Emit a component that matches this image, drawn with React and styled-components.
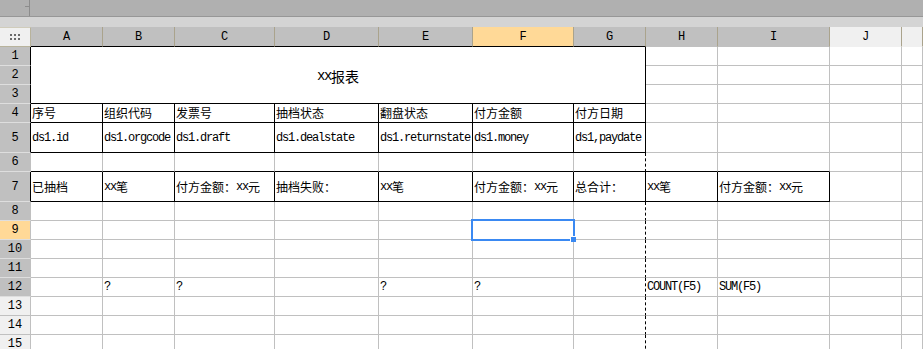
import React from 'react';
import styled, { createGlobalStyle } from 'styled-components';

const GlobalStyle = createGlobalStyle`
  html, body {
    margin: 0;
    padding: 0;
    background: #ffffff;
    overflow: hidden;
  }
  * {
    box-sizing: border-box;
  }
`;

const GRAY = '#c0c0c0';
const BLACK = '#000000';
const HEAD = '#c0c0c0';
const HEAD_LIGHT = '#f0f0f0';
const HEAD_SEL = '#ffd997';
const TAN = '#aaa38c';

const COLS = ['A', 'B', 'C', 'D', 'E', 'F', 'G', 'H', 'I', 'J', ''];
const WIDTHS = [72, 72, 100, 104, 94, 101, 72, 72, 112, 72];
const ROWS = Array.from({ length: 15 }, (_, i) => i + 1);

const CONTENT = {
  4: ['序号', '组织代码', '发票号', '抽档状态', '翻盘状态', '付方金额', '付方日期'],
  5: ['ds1.id', 'ds1.orgcode', 'ds1.draft', 'ds1.dealstate', 'ds1.returnstate', 'ds1.money', 'ds1,paydate'],
  7: ['已抽档', 'xx笔', '付方金额：xx元', '抽档失败：', 'xx笔', '付方金额：xx元', '总合计：', 'xx笔', '付方金额：xx元'],
  12: ['', '?', '?', '', '?', '?', '', 'COUNT(F5)', 'SUM(F5)'],
};

const Page = styled.div`
  width: 923px;
  height: 349px;
  overflow: hidden;
  background: #ffffff;
  display: flex;
  flex-direction: column;
`;

const TopBar = styled.div`
  height: 17px;
  flex: none;
  display: flex;
  background: #b0b0b0;
  border-bottom: 1px solid #979797;
`;

const TopLeft = styled.div`
  width: 30px;
  display: flex;
  justify-content: flex-end;
  padding-top: 6px;
  border-right: 1px solid #8c8c8c;
`;

const Tick = styled.div`
  width: 4px;
  height: 1px;
  background: #8c8c8c;
`;

const Band = styled.div`
  height: 10px;
  flex: none;
  background: #d4d4d4;
`;

const Sheet = styled.div`
  display: grid;
  grid-template-columns: 31px ${WIDTHS.map((w) => `${w}px`).join(' ')} 1fr;
  grid-template-rows: 20px ${ROWS.map((r) => (r === 5 || r === 7 ? '30px' : '19px')).join(' ')};
  font-family: "Noto Sans CJK SC", sans-serif;
  font-size: 12px;
  color: #000;
`;

const Corner = styled.div`
  background: #f0f0f0;
  border: 1px solid #b8b39c;
  border-left: none;
  border-top-color: #d0ccbb;
  display: flex;
  align-items: center;
  justify-content: center;
`;

const Dots = styled.div`
  display: grid;
  grid-template-columns: repeat(3, 2px);
  grid-auto-rows: 2px;
  gap: 2px;
  span {
    background: #6a6a6a;
  }
`;

const ColHead = styled.div`
  background: ${(p) => p.$bg};
  border-right: 1px solid ${TAN};
  border-bottom: 1px solid ${(p) => p.$bottom};
  display: flex;
  align-items: center;
  justify-content: center;
  font-family: "Liberation Mono", monospace;
  font-size: 12px;
  line-height: 1;
  padding-top: 1px;
`;

const RowHead = styled.div`
  grid-column: 1;
  background: ${(p) => p.$bg};
  border-right: 1px solid ${(p) => p.$right};
  border-bottom: 1px solid ${(p) => p.$bottom};
  display: flex;
  align-items: center;
  justify-content: center;
  font-family: "Liberation Mono", monospace;
  font-size: 12px;
  line-height: 1;
`;

const Cell = styled.div`
  position: relative;
  background: #ffffff;
  border-right: 1px ${(p) => (p.$dashed ? 'dashed' : 'solid')} ${(p) => p.$right};
  border-bottom: 1px solid ${(p) => p.$bottom};
  display: flex;
  align-items: center;
  padding-left: 1px;
  white-space: nowrap;
  line-height: 1;
  min-width: 0;
`;

const Title = styled.div`
  grid-column: 2 / span 7;
  grid-row: 2 / span 3;
  border-right: 1px solid ${BLACK};
  border-bottom: 1px solid ${BLACK};
  display: flex;
  align-items: center;
  justify-content: center;
  font-size: 14px;
  line-height: 1;
  padding-top: 1px;
`;

const Lat = styled.span`
  font-family: "Liberation Mono", monospace;
  letter-spacing: -0.1em;
`;

const Selection = styled.div`
  position: absolute;
  z-index: 2;
  left: -2px;
  top: -2px;
  width: 104px;
  height: 22px;
  border: 2px solid #3a89f2;
  pointer-events: none;
`;

const Handle = styled.div`
  position: absolute;
  left: 97px;
  top: 15px;
  width: 6px;
  height: 6px;
  background: #3a89f2;
  border: 1px solid #ffffff;
  border-right: none;
  border-bottom: none;
`;

const Txt = ({ text }) =>
  text
    .split(/([\x20-\x7e]+)/)
    .filter(Boolean)
    .map((part, i) => (/^[\x20-\x7e]+$/.test(part) ? <Lat key={i}>{part}</Lat> : <span key={i}>{part}</span>));

const inTable = (r, c) => ((r === 4 || r === 5) && c <= 6) || (r === 7 && c <= 8);

const rightOf = (r, c) => {
  if (inTable(r, c)) return { color: BLACK, dashed: false };
  if (c === 6) return { color: BLACK, dashed: true };
  return { color: GRAY, dashed: false };
};

const bottomOf = (r, c) => (inTable(r, c) || (r === 6 && c <= 8) ? BLACK : GRAY);

const rowHeadBg = (r) => (r === 9 ? HEAD_SEL : r <= 12 ? HEAD : HEAD_LIGHT);

const colHeadBg = (c) => (c === 5 ? HEAD_SEL : c <= 8 ? HEAD : HEAD_LIGHT);

const App = () => (
  <Page>
    <GlobalStyle />
    <TopBar>
      <TopLeft>
        <Tick />
      </TopLeft>
    </TopBar>
    <Band />
    <Sheet>
      <Corner>
        <Dots>
          {Array.from({ length: 6 }, (_, i) => (
            <span key={i} />
          ))}
        </Dots>
      </Corner>
      {COLS.map((name, c) => (
        <ColHead key={c} $bg={colHeadBg(c)} $bottom={c <= 6 ? BLACK : colHeadBg(c)}>
          {name}
        </ColHead>
      ))}
      {ROWS.map((r) => {
        const light = r > 12;
        const headRight = r <= 5 || r === 7 ? BLACK : GRAY;
        return (
          <React.Fragment key={r}>
            <RowHead $bg={rowHeadBg(r)} $right={headRight} $bottom={light ? GRAY : '#dedede'}>
              {r}
            </RowHead>
            {r === 1 && (
              <Title>
                <Txt text="xx报表" />
              </Title>
            )}
            {COLS.map((_, c) => {
              if (r <= 3 && c <= 6) return null;
              const right = rightOf(r, c);
              const text = (CONTENT[r] && CONTENT[r][c]) || '';
              return (
                <Cell key={c} $right={right.color} $dashed={right.dashed} $bottom={bottomOf(r, c)}>
                  {text && <Txt text={text} />}
                  {r === 9 && c === 5 && (
                    <Selection>
                      <Handle />
                    </Selection>
                  )}
                </Cell>
              );
            })}
          </React.Fragment>
        );
      })}
    </Sheet>
  </Page>
);

export default App;
